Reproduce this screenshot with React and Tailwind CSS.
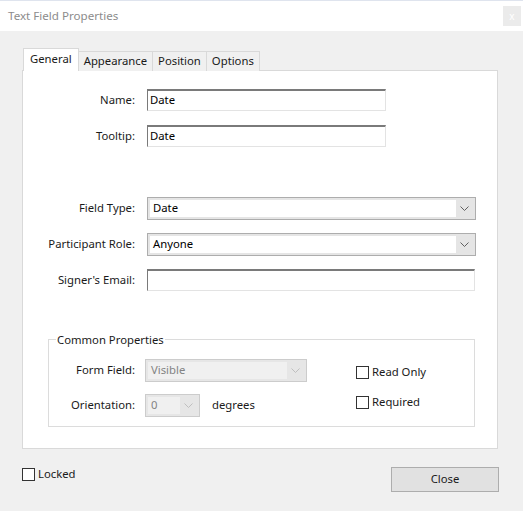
import React from 'react';

function TextInput({ value = '', width }) {
  return (
    <div
      className={`${width} h-[22px] bg-white border border-[#e3e3e3] border-t-[#7a7a7a] border-l-[#7a7a7a] border-t-2 flex items-center px-[2px] text-black`}
    >
      {value}
    </div>
  );
}

function Chevron({ color = '#555' }) {
  return (
    <svg width="9" height="5" viewBox="0 0 9 5" fill="none">
      <path d="M0.5 0.5 L4.5 4.5 L8.5 0.5" stroke={color} strokeWidth="1" />
    </svg>
  );
}

function Select({ value, width, disabled }) {
  return (
    <div
      className={`${width} h-[23px] flex p-[2px] border ${
        disabled ? 'border-[#cccccc] bg-[#e6e6e6]' : 'border-[#adadad] bg-[#e5e5e5]'
      }`}
    >
      <div
        className={`flex-1 flex items-center pl-[3px] ${
          disabled ? 'bg-[#f0f0f0] text-[#838383]' : 'bg-white text-black'
        }`}
      >
        {value}
      </div>
      <div className="w-[17px] flex items-center justify-center">
        <Chevron color={disabled ? '#bfbfbf' : '#606060'} />
      </div>
    </div>
  );
}

function Checkbox({ label }) {
  return (
    <label className="flex items-center gap-[3px] leading-[14px]">
      <span className="w-[13px] h-[13px] border border-[#333] bg-white" />
      <span>{label}</span>
    </label>
  );
}

function Row({ label, children, className = '' }) {
  return (
    <div className={`flex items-center ${className}`}>
      <div className="w-[112px] text-right">{label}</div>
      <div className="ml-[12px]">{children}</div>
    </div>
  );
}

export default function App() {
  const tabs = ['Appearance', 'Position', 'Options'];
  return (
    <div
      className="w-[523px] h-[511px] bg-[#f0f0f0] text-[11.3px] text-[#1a1a1a] overflow-hidden"
      style={{ fontFamily: '"Noto Sans", "Open Sans", sans-serif' }}
    >
      <div className="h-[1px] bg-[#dfe4ee]" />
      {/* title bar */}
      <div className="h-[30px] bg-white flex items-center justify-between pl-[8px] pr-[2px]">
        <span className="text-[#8c8c8c] text-[11.6px]">Text Field Properties</span>
        <div className="w-[18px] h-[20px] bg-[#ebebeb] flex items-center justify-center text-[10px] text-white">
          x
        </div>
      </div>

      <div className="pl-[22px] pt-[17px]">
        {/* tabs */}
        <div className="flex items-end h-[23px] pl-[1px] relative z-10">
          <div className="h-[23px] px-[6px] bg-white border border-[#d9d9d9] border-b-0 flex items-center pb-[2px]">
            General
          </div>
          {tabs.map((t) => (
            <div
              key={t}
              className="h-[20px] px-[5px] bg-[#f0f0f0] border border-[#d9d9d9] border-l-0 border-b-0 flex items-center"
            >
              {t}
            </div>
          ))}
        </div>

        {/* panel */}
        <div className="w-[476px] h-[379px] -mt-[1px] bg-white border border-[#d9d9d9] pt-[18px]">
          <Row label="Name:">
            <TextInput value="Date" width="w-[239px]" />
          </Row>
          <Row label="Tooltip:" className="mt-[14px]">
            <TextInput value="Date" width="w-[239px]" />
          </Row>

          <Row label="Field Type:" className="mt-[50px]">
            <Select value="Date" width="w-[329px]" />
          </Row>
          <Row label="Participant Role:" className="mt-[13px]">
            <Select value="Anyone" width="w-[329px]" />
          </Row>
          <Row label="Signer's Email:" className="mt-[13px]">
            <TextInput width="w-[328px]" />
          </Row>

          {/* group box */}
          <div className="relative ml-[25px] mt-[48px] w-[427px] h-[88px] border border-[#dcdcdc]">
            <span className="absolute -top-[7px] left-[7px] bg-white px-[1px] leading-[14px]">
              Common Properties
            </span>
            <div className="flex pt-[19px]">
              <div className="flex-1">
                <div className="flex items-center">
                  <div className="w-[86px] text-right">Form Field:</div>
                  <div className="ml-[10px]">
                    <Select value="Visible" width="w-[162px]" disabled />
                  </div>
                </div>
                <div className="flex items-center mt-[12px]">
                  <div className="w-[86px] text-right">Orientation:</div>
                  <div className="ml-[10px]">
                    <Select value="0" width="w-[55px]" disabled />
                  </div>
                  <span className="ml-[12px]">degrees</span>
                </div>
              </div>
              <div className="w-[118px] pt-[6px] flex flex-col gap-[16px]">
                <Checkbox label="Read Only" />
                <Checkbox label="Required" />
              </div>
            </div>
          </div>
        </div>

        {/* footer */}
        <div className="flex items-start justify-between w-[477px] mt-[18px]">
          <div>
            <Checkbox label="Locked" />
          </div>
          <button className="w-[108px] h-[25px] bg-[#e1e1e1] border border-[#adadad] text-[#1a1a1a]">
            Close
          </button>
        </div>
      </div>
    </div>
  );
}
